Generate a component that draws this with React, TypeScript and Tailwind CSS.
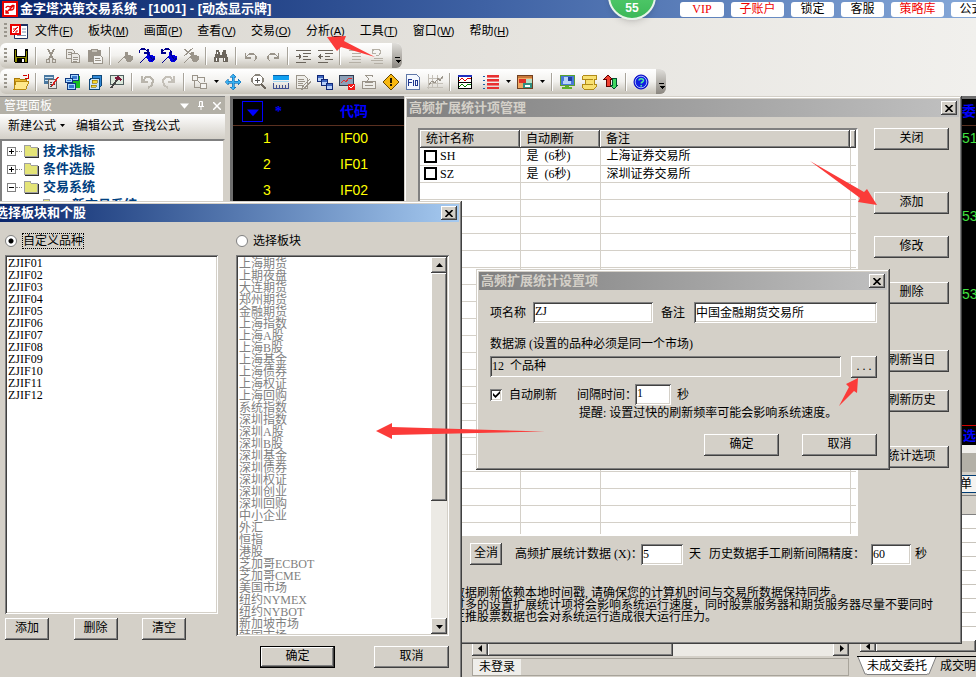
import type { ReactNode } from 'react';

const win =
  'absolute bg-[#d4d0c8] p-[3px] shadow-[inset_-1px_-1px_#404040,inset_1px_1px_#d4d0c8,inset_-2px_-2px_#808080,inset_2px_2px_#fff]';
const raised =
  'bg-[#d4d0c8] shadow-[inset_-1px_-1px_#404040,inset_1px_1px_#fff,inset_-2px_-2px_#808080]';
const sunken =
  'shadow-[inset_1px_1px_#808080,inset_-1px_-1px_#fff,inset_2px_2px_#404040,inset_-2px_-2px_#d4d0c8]';

const menus = [
  ['文件', 'F'],
  ['板块', 'M'],
  ['画面', 'P'],
  ['查看', 'V'],
  ['交易', 'O'],
  ['分析', 'A'],
  ['工具', 'T'],
  ['窗口', 'W'],
  ['帮助', 'H'],
];

const symbols = ['ZJIF01', 'ZJIF02', 'ZJIF03', 'ZJIF04', 'ZJIF05', 'ZJIF06', 'ZJIF07', 'ZJIF08', 'ZJIF09', 'ZJIF10', 'ZJIF11', 'ZJIF12'];

const boards = [
  '上海期货', '上期夜盘', '大连期货', '郑州期货', '金融期货', '上海指数', '上海A股', '上海B股',
  '上海基金', '上海债券', '上海权证', '上海回购', '系统指数', '深圳指数', '深圳A股', '深圳B股',
  '深圳基金', '深圳债券', '深圳权证', '深圳创业', '深圳回购', '中小企业', '外汇', '恒指', '港股',
  '芝加哥ECBOT', '芝加哥CME', '美国市场', '纽约NYMEX', '纽约NYBOT', '新加坡市场', '韩国市场',
];

const quotes = [
  ['1', 'IF00', '51'],
  ['2', 'IF01', ''],
  ['3', 'IF02', ''],
  ['', '', '53'],
  ['', '', ''],
  ['', '', ''],
  ['', '', '53'],
];

/* ---------- icons ---------- */

function Ico({ children }: { children: ReactNode }) {
  return (
    <svg width="16" height="16" viewBox="0 0 16 16" fill="none" shapeRendering="crispEdges" aria-hidden="true">
      {children}
    </svg>
  );
}

function Pin({ c, tip, extra }: { c: string; tip: string; extra?: string }) {
  return (
    <Ico>
      <path d="M1 15L8 8" stroke={tip} strokeWidth="1" />
      <path d="M8 4l3 0 0 3 5 1 0 3-3 3-3 0-2-4-2-1 2-2z" fill={c} />
      <path d="M9 5l4 6M12 13l4-3" stroke={tip} />
      {extra && <path d={extra} stroke={tip} strokeWidth="1.2" />}
    </Ico>
  );
}

const gray = '#9a948a';

const icons: Record<string, ReactNode> = {
  save: (
    <Ico>
      <path d="M1 1h14v14H2L1 14z" fill="#000" />
      <path d="M2 2h1v7H2zM13 3h1v6h-1z" fill="#8a8a00" />
      <path d="M4 1h8v7H4z" fill="#fff" />
      <path d="M2 9h12v1H2zM2 10h2v4H2zM12 10h2v4h-2z" fill="#8a8a00" />
      <path d="M9 11h2v3H9z" fill="#fff" />
    </Ico>
  ),
  cut: (
    <Ico>
      <path d="M5 1l5 10M11 1L6 11" stroke={gray} strokeWidth="1.4" />
      <path d="M3.5 11.5h3v3h-3zM9.5 11.5h3v3h-3z" stroke={gray} />
    </Ico>
  ),
  copy: (
    <Ico>
      <path d="M1.5 1.5h6l2 2v7h-8z" fill="#eceae6" stroke={gray} />
      <path d="M6.5 5.5h6l2 2v7h-8z" fill="#eceae6" stroke={gray} />
      <path d="M3 4h4M3 6h3M8 9h5M8 11h5M8 13h4" stroke={gray} />
    </Ico>
  ),
  paste: (
    <Ico>
      <path d="M1 2h13v12H1z" fill={gray} />
      <path d="M4 1h6v3H4z" fill="#c8c4bb" stroke={gray} />
      <path d="M6.5 7.5h7l2 2v6h-9z" fill="#f4f3f0" stroke={gray} />
      <path d="M8 10h5M8 12h6" stroke={gray} />
    </Ico>
  ),
  pin: <Pin c="#9a948a" tip="#9a948a" />,
  pinNext: <Pin c="#0000e0" tip="#00008c" extra="M0 5V3l2-2h4l3 3M9 1v4H5" />,
  pinPrev: <Pin c="#0000e0" tip="#00008c" extra="M10 5V3L8 1H4L1 4M1 1v4h4" />,
  pinClear: <Pin c="#9a948a" tip="#9a948a" extra="M1 1l9 7M10 0L1 8" />,
  find: (
    <Ico>
      <path d="M3 2h3v2h1v3h2V4h1V2h3v3l2 5v4h-5v-4H6v4H1v-4l2-5z" fill="#6b655c" />
      <path d="M3 10h1v3H3zM11 10h1v3h-1zM4 4h1v2H4z" fill="#fff" />
    </Ico>
  ),
  undo: (
    <Ico>
      <path d="M2.5 5v5h5M3 9l3-3h5l2 2v3l-2 2" stroke={gray} strokeWidth="1.2" />
    </Ico>
  ),
  redo: (
    <Ico>
      <path d="M13.5 5v5h-5M13 9l-3-3H5L3 8v3l2 2" stroke={gray} strokeWidth="1.2" />
    </Ico>
  ),
  indent: (
    <Ico>
      <path d="M1 2.5h15M8 5.5h8M8 8.5h5M8 11.5h8M1 14.5h10" stroke="#6b655c" />
      <path d="M1 8.5h5M4 6v5M5 7v3" stroke="#6b655c" />
    </Ico>
  ),
  outdent: (
    <Ico>
      <path d="M1 2.5h15M8 5.5h8M8 8.5h5M8 11.5h8M1 14.5h10" stroke="#6b655c" />
      <path d="M1 8.5h5M3 6v5M2 7v3" stroke="#6b655c" />
    </Ico>
  ),
  list: (
    <Ico>
      <path d="M2 2.5h10M5 5.5h9M5 8.5h9M5 11.5h9M2 14.5h12" stroke="#b5b0a6" />
    </Ico>
  ),
  listUndo: (
    <Ico>
      <path d="M3 4l2-3h5l2 3-2 3H7M3 1v4h4M5 10.5h9M2 12.5h12M5 15h9" stroke="#b5b0a6" />
    </Ico>
  ),
  open: (
    <Ico>
      <path d="M1 4h5l1 1h6v9H1z" fill="#e8b830" stroke="#a87808" />
      <path d="M3 7h13l-3 8H1z" fill="#ffe88c" stroke="#b88a10" />
      <path d="M10 2l2-1 2 1M15 0v4h-3" stroke="#d00000" />
    </Ico>
  ),
  report: (
    <Ico>
      <path d="M1 1h10v9H1z" fill="#4a78a0" />
      <path d="M2 3h8v1H2zM2 6h8v1H2z" fill="#cfe4f4" />
      <path d="M5.5 5.5h8v9h-8z" fill="#e4e4e4" stroke="#666" />
      <path d="M7 8h2v1H7zM10 8h2v1h-2zM7 10h2v1H7zM10 10h2v1h-2zM7 12h2v1H7z" fill="#444" />
      <path d="M15 3l-6 9" stroke="#d82020" strokeWidth="1.5" />
    </Ico>
  ),
  layout: (
    <Ico>
      <path d="M9 2h6v12H7V8z" fill="#18c020" />
      <path d="M5.5 0.5h8v6h-8z" fill="#a8d8ff" stroke="#103880" />
      <path d="M7 2h5v3H7z" fill="#3878d0" />
      <path d="M0.5 4.500h7v4h-7zM2.500 9.500h8v6h-8z" fill="#a8d8ff" stroke="#103880" />
      <path d="M2 6h4v1H2zM4 11h5v3H4z" fill="#3878d0" />
    </Ico>
  ),
  cabinet: (
    <Ico>
      <path d="M5 1h9v11l-3 3V4H5z" fill="#3088d8" stroke="#104878" />
      <path d="M4 4h8v11H2V7z" fill="#c8e4fc" stroke="#104878" />
      <path d="M5 6h5v3H5zM4 11h5v2H4z" fill="#f8d830" stroke="#806000" strokeWidth=".6" />
    </Ico>
  ),
  tool: (
    <Ico>
      <path d="M1.5 1.5h13v9h-13z" fill="#dce8dc" stroke="#506060" />
      <path d="M5 4l4-2 4 3-1 3-2-2-2 1z" fill="#7a1838" />
      <path d="M8 6L2 14" stroke="#444" strokeWidth="2" />
    </Ico>
  ),
  back: (
    <Ico>
      <path d="M3 2v6h6M4 7l3-4h4l3 3-1 5-4 3" stroke="#b9b5ac" strokeWidth="2" />
    </Ico>
  ),
  forward: (
    <Ico>
      <path d="M13 2v6H7M12 7L9 3H5L2 6l1 5 4 3" stroke="#c4c0b8" strokeWidth="2" />
    </Ico>
  ),
  tree: (
    <Ico>
      <path d="M1.5 1.5h5v5h-5zM9.500 9.500h6v5h-6z" fill="#f4f3f0" stroke={gray} />
      <path d="M3.500 7v6h5M7 3.500h6v4M7 7l3 3" stroke={gray} />
    </Ico>
  ),
  move: (
    <Ico>
      <path d="M8 0l3 3H9v4h4V5l3 3-3 3V9H9v4h2l-3 3-3-3h2V9H3v2L0 8l3-3v2h4V3H5z" fill="#38b0f0" stroke="#0868b0" strokeWidth=".6" />
    </Ico>
  ),
  zoom: (
    <Ico>
      <path d="M4 1h5l3 3v4l-3 3H4L1 8V4z" fill="#fff" stroke="#8a857c" strokeWidth="1.2" />
      <path d="M4 6.500h5M6.500 4v5" stroke="#555" />
      <path d="M10 10l5 5" stroke="#6b655c" strokeWidth="2" />
    </Ico>
  ),
  ruler: (
    <Ico>
      <path d="M0 1h16v5H0z" fill="#10a0f0" />
      <path d="M0 1h16v1H0z" fill="#0860a8" />
      <path d="M0 7h16v1H0z" fill="#a8d8f0" />
      <path d="M0.500 9v5M3.500 11v3M6.500 11v3M9.500 11v3M12.500 11v3M15.500 9v5M0 14.500h16" stroke="#405090" />
    </Ico>
  ),
  note: (
    <Ico>
      <path d="M1.5 1.5h8l3 3v10h-11z" fill="#eeede9" stroke={gray} />
      <path d="M3 5h6M3 7h7M3 9h5M3 11h5" stroke={gray} />
      <path d="M15 5L8 12l-1 3 3-1 6-7" stroke={gray} strokeWidth="1.3" />
    </Ico>
  ),
  cascade: (
    <Ico>
      <path d="M0.500 1.500h6v6h-6zM4.500 5.500h6v6h-6zM9.500 9.500h6v6h-6z" fill="#b8d0f8" stroke="#102878" />
      <path d="M1 2h5v2H1zM5 6h5v2H5zM10 10h5v2h-5z" fill="#4068c0" />
    </Ico>
  ),
  chartCheck: (
    <Ico>
      <path d="M0.500 1.500h14v10h-14z" fill="#8ca0b8" stroke="#303c50" />
      <path d="M2 9l3-3 2 2 3-4 3 1" stroke="#e03030" />
      <path d="M9 10h7v6H9z" fill="#f01818" />
      <path d="M10 12l2 2 3-3" stroke="#fff" />
    </Ico>
  ),
  sum: (
    <Ico>
      <path d="M1.5 7.500h13v7h-13z" fill="#eeede9" stroke={gray} />
      <path d="M11.500 3V1.500H4.500L8 5 4.500 8.500h7V7M4 11.500h8" stroke={gray} />
    </Ico>
  ),
  warn: (
    <Ico>
      <path d="M8 0l8 8-8 8-8-8z" fill="#f8b810" stroke="#684800" />
      <path d="M7 4h2v5H7zM7 10h2v2H7z" fill="#201800" />
    </Ico>
  ),
  f10: (
    <Ico>
      <path d="M1.5 0.500h10l3 3v12h-13z" fill="#f4f8ff" stroke="#6078a8" />
      <path d="M3.500 12V5.500h3M3.500 8.500h3M8.500 6v6M10.500 6.500h2v5h-2z" stroke="#203890" />
    </Ico>
  ),
  chart: (
    <Ico>
      <path d="M1.500 0v15M0 13.500h16M1 4.500h15M5.500 1v13M10.500 1v13M1 9.500h15" stroke="#c4c0b8" />
      <path d="M2 11l3-4 3 2 3-5 2 3 3-5" stroke={gray} />
    </Ico>
  ),
  wave: (
    <Ico>
      <path d="M1.500 1.500h13v13h-13z" fill="#fff" stroke="#000" />
      <path d="M1 1h14v2H1z" fill="#2030c0" />
      <path d="M2 7l3-3 3 3 3-3 3 1" stroke="#e00000" />
      <path d="M2 13l3-3 3 3 3-3 3 1" stroke="#008000" />
      <path d="M1 8.500h14" stroke="#000" />
    </Ico>
  ),
  bars: (
    <Ico>
      <path d="M0 2h2M0 6h2M0 10h2M0 14h2" stroke="#1860a8" />
      <path d="M4 1h12v2H4zM4 5h12v2H4zM4 9h12v2H4zM4 13h12v2H4z" fill="#e83030" />
      <path d="M4 3h12v1H4zM4 7h12v1H4zM4 11h12v1H4z" fill="#f08080" />
    </Ico>
  ),
  panes: (
    <Ico>
      <path d="M0.500 1.500h15v13h-15z" fill="#f0a860" stroke="#704020" />
      <path d="M1 2h14v2H1z" fill="#c87838" />
      <path d="M2 5h7v4H2z" fill="#e03028" />
      <path d="M9 5h6v4H9z" fill="#b8e0c8" />
      <path d="M6 9h9v5H6z" fill="#2f8f80" />
      <path d="M8 11h5v2H8z" fill="#fff" />
    </Ico>
  ),
  monitor: (
    <Ico>
      <path d="M1 1h14v10H1z" fill="#4878d8" stroke="#58a030" />
      <path d="M5 3h4v4H5zM4 7h8v3H4z" fill="#b8d4f8" />
      <path d="M9 3h4v4H9z" fill="#203fa0" />
      <path d="M6 12h4v1H6zM3 13h10v2H3z" fill="#60b028" />
    </Ico>
  ),
  scroll: (
    <Ico>
      <path d="M3 1h12v4h-2v5h2v3l-2 2H3l-2-2v-3h3V5H1V3z" fill="#f8e070" stroke="#b08a18" />
      <path d="M4 5h8M4 10h8" stroke="#b08a18" />
    </Ico>
  ),
  swap: (
    <Ico>
      <path d="M5 1l4 4H7v7H3V5H1z" fill="#f04030" stroke="#600000" />
      <path d="M11 15l-4-4h2V4h4v7h2z" fill="#40d860" stroke="#005030" />
    </Ico>
  ),
  help: (
    <svg width="16" height="16" viewBox="0 0 16 16" fill="none" aria-hidden="true">
      <circle cx="8" cy="8" r="7" fill="#1020e0" stroke="#0000c0" />
      <circle cx="8" cy="8" r="5.800" stroke="#c8dcff" strokeWidth=".8" />
      <path d="M6 6.500c0-2.500 4.500-2.500 4.500 0C10.500 8 8.200 8 8.200 9.500M8.200 11v1.500" stroke="#50f0a0" strokeWidth="1.500" />
    </svg>
  ),
};

function AppLogo() {
  return (
    <svg width="16" height="16" viewBox="0 0 16 16" fill="none" aria-hidden="true">
      <path d="M1 1h14v14H1z" fill="#fff" stroke="#e80000" strokeWidth="2" />
      <path d="M4 7c0-2 3-2 4-1l3-2M4 12l3-3h2c3 0 3-2 3-5M4 12l8-8M4 9v3h3" stroke="#e80000" strokeWidth="1.300" />
    </svg>
  );
}

function DocLogo() {
  return (
    <svg width="18" height="16" viewBox="0 0 18 16" fill="none" aria-hidden="true">
      <path d="M4.500 1.500h13v14h-13z" fill="#fff" stroke="#203060" />
      <path d="M4 1h14v2H4z" fill="#203060" />
      <path d="M12 6h4M12 9h4M7 12.500h9" stroke="#8090b0" />
      <path d="M1 2h9v9H1z" fill="#fff" stroke="#e80000" strokeWidth="2" />
      <path d="M3 6h2l3-2M3 9l5-5M5 9h2V7" stroke="#e80000" />
    </svg>
  );
}

function Folder() {
  return (
    <svg width="16" height="14" viewBox="0 0 16 14" shapeRendering="crispEdges" aria-hidden="true">
      <path d="M1 3l1-2h5l1 2h6v9H1z" fill="#e4e478" stroke="#a0a0a0" />
      <path d="M2 13h13V4" fill="none" stroke="#303030" />
    </svg>
  );
}

function Tri({ dir, className }: { dir: 'up' | 'down' | 'left' | 'right'; className?: string }) {
  const d = { up: 'M0 5h7L3.500 1z', down: 'M0 2h7L3.500 6z', left: 'M5 0v7L1 3.500z', right: 'M2 0v7l4-3.500z' }[dir];
  return (
    <svg width="7" height="7" viewBox="0 0 7 7" className={className} aria-hidden="true">
      <path d={d} fill="currentColor" />
    </svg>
  );
}

/* ---------- small controls ---------- */

function Btn({ children, className = 'w-[75px]' }: { children: ReactNode; className?: string }) {
  return <button className={`h-[22px] shrink-0 pb-0.5 text-center ${raised} ${className}`}>{children}</button>;
}

function CloseBtn() {
  return (
    <button aria-label="关闭窗口" className={`mr-0.5 flex h-3.5 w-4 items-center justify-center text-black ${raised}`}>
      <svg width="8" height="7" viewBox="0 0 8 7" aria-hidden="true">
        <path d="M0.500 0l7 7M7.500 0l-7 7" stroke="#000" strokeWidth="1.600" />
      </svg>
    </button>
  );
}

function TitleBar({ text, active }: { text: string; active?: boolean }) {
  return (
    <header
      className={`flex h-[18px] items-center justify-between pl-0.5 text-[13px] leading-[18px] font-bold ${
        active ? 'bg-linear-to-r from-[#0a246a] to-[#a6caf0] text-white' : 'bg-linear-to-r from-[#808080] to-[#c0c0c0] text-[#d4d0c8]'
      }`}
    >
      <h2>{text}</h2>
      <CloseBtn />
    </header>
  );
}

function Tool({ name }: { name: string }) {
  return (
    <button aria-label={name} className="flex w-[22px] shrink-0 items-center justify-center">
      {icons[name]}
    </button>
  );
}

function Sep() {
  return <span className="mx-[3px] h-[18px] w-0.5 shrink-0 border-r border-white bg-[#a8a49b]" />;
}

function Grip() {
  return <span className="mr-[3px] ml-1 h-4 w-[3px] shrink-0 bg-[repeating-linear-gradient(#9a968d_0_2px,transparent_2px_4px)]" />;
}

function Drop() {
  return (
    <button aria-label="更多" className="flex w-3 shrink-0 items-center justify-center">
      <svg width="5" height="3" viewBox="0 0 5 3" aria-hidden="true">
        <path d="M0 0h5L2.500 3z" />
      </svg>
    </button>
  );
}

function More() {
  return (
    <button aria-label="工具栏选项" className="ml-1 flex w-2.5 items-end justify-center self-stretch rounded-r-md bg-linear-to-b from-[#e0deda] to-[#8b8780] pb-1">
      <svg width="7" height="7" viewBox="0 0 7 7" shapeRendering="crispEdges" aria-hidden="true">
        <path d="M1 0h5v1H1zM1 3h6L4 6z" />
      </svg>
    </button>
  );
}

const bar = 'flex w-max items-center rounded-md bg-linear-to-b from-white via-[#f2f1ee] to-[#c6c2b8]';

/* ---------- main window ---------- */

function Chrome() {
  return (
    <>
      <header className="flex h-[18px] items-center bg-linear-to-r from-[#0a246a] via-[#3f62a4] to-[#86a8d8] text-white">
        <span className="ml-0.5 flex">
          <AppLogo />
        </span>
        <h1 className="ml-0.5 flex-1 text-[13px] leading-[18px] font-bold whitespace-nowrap">
          金字塔决策交易系统
          <span className="font-['Liberation_Sans','Noto_Sans_CJK_SC',sans-serif]"> - [1001] - [动态显示牌]</span>
        </h1>
        <div className="flex w-[296px] gap-[7px] overflow-hidden text-black">
          <button className="h-[15px] w-11 shrink-0 rounded-[3px] bg-white leading-[15px] text-[#f00000]">VIP</button>
          <button className="h-[15px] w-[53px] shrink-0 rounded-[3px] bg-white leading-[15px] text-[#f00000]">子账户</button>
          <button className="h-[15px] w-[43px] shrink-0 rounded-[3px] bg-white leading-[15px]">锁定</button>
          <button className="h-[15px] w-[43px] shrink-0 rounded-[3px] bg-white leading-[15px]">客服</button>
          <button className="h-[15px] w-[53px] shrink-0 rounded-[3px] bg-white leading-[15px] text-[#f00000]">策略库</button>
          <button className="h-[15px] w-[53px] shrink-0 rounded-[3px] bg-white leading-[15px]">公式库</button>
        </div>
      </header>
      <div className="bg-linear-to-r from-[#d9d6cf] to-[#f1f0ed] pb-0.5">
        <nav className="flex h-[25px] items-center gap-[15px]">
          <span className="-mr-2 flex items-center">
            <Grip />
            <DocLogo />
          </span>
          {menus.map(([label, key]) => (
            <button key={key} className="whitespace-nowrap">
              {label}
              <span className="font-['Liberation_Sans'] text-[11px]">
                (<u>{key}</u>)
              </span>
            </button>
          ))}
        </nav>
        <div className={`h-[25px] ${bar}`}>
          <Grip />
          <Tool name="save" />
          <Sep />
          <Tool name="cut" />
          <Tool name="copy" />
          <Tool name="paste" />
          <Sep />
          <Tool name="pin" />
          <Tool name="pinNext" />
          <Tool name="pinPrev" />
          <Tool name="pinClear" />
          <Sep />
          <Tool name="find" />
          <Sep />
          <Tool name="undo" />
          <Tool name="redo" />
          <Sep />
          <Tool name="indent" />
          <Tool name="outdent" />
          <Sep />
          <Tool name="list" />
          <Tool name="listUndo" />
          <More />
        </div>
        <div className={`mt-px h-[25px] ${bar}`}>
          <Grip />
          <Tool name="open" />
          <Sep />
          <Tool name="report" />
          <Tool name="layout" />
          <Tool name="cabinet" />
          <Tool name="tool" />
          <Sep />
          <Tool name="back" />
          <Tool name="forward" />
          <Sep />
          <Tool name="tree" />
          <Drop />
          <Tool name="move" />
          <span className="w-1" />
          <Tool name="zoom" />
          <Tool name="ruler" />
          <Tool name="note" />
          <Tool name="cascade" />
          <Tool name="chartCheck" />
          <Tool name="sum" />
          <Tool name="warn" />
          <Tool name="f10" />
          <Tool name="chart" />
          <Sep />
          <Tool name="wave" />
          <span className="w-1" />
          <Tool name="bars" />
          <Drop />
          <Tool name="panes" />
          <Drop />
          <Sep />
          <Tool name="monitor" />
          <Tool name="scroll" />
          <Tool name="swap" />
          <Sep />
          <Tool name="help" />
          <More />
        </div>
      </div>
    </>
  );
}

function TreeItem({ text, open }: { text: string; open?: boolean }) {
  return (
    <li className="flex h-[18px] items-center">
      <span className="flex size-[9px] items-center justify-center border border-[#808080] bg-white">
        <svg width="5" height="5" viewBox="0 0 5 5" shapeRendering="crispEdges" aria-hidden="true">
          <path d={open ? 'M0 2h5v1H0z' : 'M0 2h5v1H0zM2 0h1v5H2z'} />
        </svg>
      </span>
      <span className="mr-px w-1.5 border-t border-dotted border-[#808080]" />
      <Folder />
      <span className="ml-1 text-[13px] leading-[18px] font-bold text-[#004080]">{text}</span>
    </li>
  );
}

function SidePanel() {
  return (
    <aside className="flex w-[225px] shrink-0 flex-col bg-[#d4d0c8]">
      <div className="flex h-[18px] items-center border-t border-[#808080] bg-[#b3b0a7] px-1 text-white">
        <h2 className="flex-1">管理面板</h2>
        <button aria-label="菜单" className="mr-2">
          <Tri dir="down" className="size-[9px]" />
        </button>
        <button aria-label="固定" className="mr-2">
          <svg width="8" height="9" viewBox="0 0 8 9" fill="none" aria-hidden="true">
            <path d="M2.500 5V0.500h3V5M1 5.500h6M4 6v3M5 1v4" stroke="#fff" />
          </svg>
        </button>
        <button aria-label="关闭">
          <svg width="8" height="8" viewBox="0 0 8 8" aria-hidden="true">
            <path d="M0 0l8 8M8 0L0 8" stroke="#fff" strokeWidth="1.500" />
          </svg>
        </button>
      </div>
      <div className="flex h-[25px] items-center bg-linear-to-b from-white to-[#d4d0c8] pb-0.5 pl-2">
        <button>新建公式</button>
        <Drop />
        <button className="ml-2">编辑公式</button>
        <button className="ml-2">查找公式</button>
      </div>
      <div className="flex-1 border-2 border-[#808080] border-r-[#d4d0c8] bg-white pt-px pl-[5px]">
        <ul>
          <TreeItem text="技术指标" />
          <TreeItem text="条件选股" />
          <TreeItem text="交易系统" open />
          <li className="flex h-[18px] items-center pl-[35px]">
            <Folder />
            <span className="ml-[14px] text-[13px] leading-[18px] font-bold text-[#004080]">新交易系统</span>
          </li>
        </ul>
      </div>
    </aside>
  );
}

function Quotes() {
  return (
    <div className="h-[349px] overflow-hidden border-3 border-r-0 border-b-0 border-[#6e6e6e] bg-black">
      <table className="w-full table-fixed border-collapse text-left">
        <thead>
          <tr className="h-[26px] border-b border-[#5a3020] text-[#0000ff]">
            <th className="w-[42px] pl-[9px]">
              <button aria-label="排序" className="flex size-[21px] items-center justify-center border border-[#0000ff]">
                <Tri dir="down" className="size-3" />
              </button>
            </th>
            <th className="w-[45px] text-sm font-bold">*</th>
            <th className="pl-5 text-sm">代码</th>
            <th className="w-[14px] text-sm whitespace-nowrap">委卖</th>
          </tr>
        </thead>
        <tbody className="font-['Liberation_Sans'] text-sm">
          {quotes.map(([no, code, ask], i) => (
            <tr key={i} className="h-[26px] text-[#ffff00]">
              <td className="pl-[30px]">{no}</td>
              <td />
              <td className="pl-5">{code}</td>
              <td className="text-[#40e040]">{ask}</td>
            </tr>
          ))}
        </tbody>
      </table>
      <div className="mt-[118px] flex h-5 items-center justify-end border-t border-[#d00000] text-[13px] font-bold text-[#0000ff]">
        <a href="#pick">选</a>
      </div>
    </div>
  );
}

function OrderPane() {
  return (
    <section className="flex w-[119px] shrink-0 flex-col overflow-hidden bg-[#d4d0c8]">
      <div className="h-2 shrink-0 bg-[#f0efec]" />
      <div className="h-[19px] shrink-0 bg-[#b3b0a7]" />
      <div className="flex h-[23px] shrink-0 items-center justify-end">
        <button className="h-[18px] w-[119px] border-y border-[#003c74] bg-[#f4f3f0] pr-1 text-right">下单</button>
      </div>
      <div className="h-5 shrink-0 border-y border-[#808080] bg-[#d4d0c8]" />
      <div className="flex-1 bg-white bg-[repeating-linear-gradient(#fff_0_13px,#c8c4bc_13px_14px)]" />
      <div className="flex h-[17px] shrink-0 border-b border-black pb-1">
        <span className={`ml-[3px] flex w-4 items-center justify-center ${raised}`}>
          <Tri dir="left" />
        </span>
        <span className={`flex-1 ${raised}`} />
      </div>
      <div className="flex h-5 shrink-0 items-start whitespace-nowrap">
        <TabEdge d="M1 0l7 17h2V0z" line="M1 0l7 17h2" />
        <button className="h-[18px] border-b border-[#808080] bg-white">未成交委托</button>
        <TabEdge d="M0 0v17h2l7-17z" line="M0 17h2l7-17" />
        <button className="ml-[3px] h-[18px]">成交明细</button>
      </div>
    </section>
  );
}

function TabEdge({ d, line }: { d: string; line: string }) {
  return (
    <svg width="10" height="18" viewBox="0 0 10 18" className="shrink-0" aria-hidden="true">
      <path d={d} fill="#fff" />
      <path d={line} fill="none" stroke="#808080" />
    </svg>
  );
}

function Desk() {
  return (
    <div className="flex min-w-0 flex-1 flex-col">
      <Quotes />
      <div className="flex flex-1">
        <section className="flex flex-1 flex-col justify-end pl-[242px]">
          <div className="flex h-4 bg-[#eceae5]">
            <span className={`flex w-4 items-center justify-center ${raised}`}>
              <Tri dir="left" />
            </span>
            <span className={`w-[185px] ${raised}`} />
            <span className="flex-1" />
            <span className={`flex w-4 items-center justify-center ${raised}`}>
              <Tri dir="right" />
            </span>
          </div>
          <div className="mt-0.5 mb-px flex h-[18px] border border-[#a8a49b]">
            <button className="w-12 bg-[#efeeea]">未登录</button>
          </div>
        </section>
        <span className="w-2" />
        <OrderPane />
      </div>
    </div>
  );
}

/* ---------- dialogs ---------- */

function ManagerDialog() {
  return (
    <section className={`top-24 left-[404px] w-[558px] ${win}`}>
      <TitleBar text="高频扩展统计项管理" />
      <div className="flex gap-4 pt-[11px] pr-2.5 pl-[11px]">
        <div className="h-[408px] flex-1 overflow-hidden border-2 border-[#808080] border-r-white border-b-white bg-white">
          <table className="w-full table-fixed border-collapse text-left">
            <thead>
              <tr className="h-[18px]">
                <th className={`w-[100px] pl-1.5 font-normal ${raised}`}>统计名称</th>
                <th className={`w-20 pl-1.5 font-normal ${raised}`}>自动刷新</th>
                <th className={`pl-1.5 font-normal ${raised}`}>备注</th>
                <th className={`w-1.5 ${raised}`} />
              </tr>
            </thead>
            <tbody>
              {[['SH', '上海证券交易所'], ['SZ', '深圳证券交易所'], ...Array(21).fill(['', ''])].map(([code, note], i) => (
                <tr key={i} className="h-[17px] border-b border-[#d4d0c8] leading-4">
                  <td className="border-r border-[#d4d0c8] pl-1">
                    {code && (
                      <label className="flex items-center gap-[3px]">
                        <input type="checkbox" className="size-[13px] appearance-none border-2 border-black bg-white" />
                        {code}
                      </label>
                    )}
                  </td>
                  <td className="border-r border-[#d4d0c8] pl-1.5">{code && <>是&nbsp;&nbsp;(6秒)</>}</td>
                  <td className="border-r border-[#d4d0c8] pl-1.5">{note}</td>
                  <td />
                </tr>
              ))}
            </tbody>
          </table>
        </div>
        <div className="flex flex-col">
          <Btn>关闭</Btn>
          <span className="h-[42px]" />
          <Btn>添加</Btn>
          <span className="h-[22px]" />
          <Btn>修改</Btn>
          <span className="h-6" />
          <Btn>删除</Btn>
          <span className="h-[46px]" />
          <Btn>刷新当日</Btn>
          <span className="h-[18px]" />
          <Btn>刷新历史</Btn>
          <span className="h-[34px]" />
          <Btn>统计选项</Btn>
        </div>
      </div>
      <div className="mt-[7px] flex h-[22px] items-center pl-[63px]">
        <Btn className="w-8">全消</Btn>
        <label htmlFor="days" className="ml-[13px] w-[126px] whitespace-nowrap">
          高频扩展统计数据 (X)：
        </label>
        <input id="days" defaultValue="5" className={`h-[21px] w-[42px] bg-white px-0.5 ${sunken}`} />
        <span className="ml-1.5">天</span>
        <label htmlFor="gap" className="ml-2 w-[162px] whitespace-nowrap">
          历史数据手工刷新间隔精度：
        </label>
        <input id="gap" defaultValue="60" className={`h-[21px] w-10 bg-white px-0.5 ${sunken}`} />
        <span className="ml-1">秒</span>
      </div>
      <p className="mt-[22px] mb-[18px] pl-[46px] leading-3 whitespace-nowrap">
        数据刷新依赖本地时间戳, 请确保您的计算机时间与交易所数据保持同步。
        <br />
        过多的设置扩展统计项将会影响系统运行速度，同时股票服务器和期货服务器尽量不要同时
        <br />
        主推股票数据也会对系统运行造成很大运行压力。
      </p>
    </section>
  );
}

function SettingDialog() {
  return (
    <section className={`top-[269px] left-[476px] w-[414px] ${win}`}>
      <TitleBar text="高频扩展统计设置项" />
      <div className="pt-3 pr-2.5 pb-[11px] pl-[11px]">
        <div className="flex items-center">
          <label htmlFor="item">项名称</label>
          <input id="item" defaultValue="ZJ" className={`ml-[7px] h-[21px] w-[120px] bg-white px-0.5 pb-0.5 ${sunken}`} />
          <label htmlFor="memo" className="ml-2">
            备注
          </label>
          <input id="memo" defaultValue="中国金融期货交易所" className={`ml-[9px] h-[21px] min-w-0 flex-1 bg-white px-0.5 pb-0.5 ${sunken}`} />
        </div>
        <label htmlFor="source" className="mt-[13px] block">
          数据源 (设置的品种必须是同一个市场)
        </label>
        <div className="mt-1 flex">
          <input id="source" readOnly value="12  个品种" className={`h-[21px] min-w-0 flex-1 px-0.5 pb-1 ${sunken}`} />
          <Btn className="ml-2.5 w-[26px]">. . .</Btn>
        </div>
        <div className="mt-1.5 flex h-[21px] items-center">
          <label className="flex items-center gap-[7px]">
            <input type="checkbox" defaultChecked className={`size-3 appearance-none bg-white ${sunken}`} />
            <svg width="7" height="7" viewBox="0 0 7 7" className="-mr-[5px] -ml-4" aria-hidden="true">
              <path d="M0 2v2.500l2.500 2.500 4.500-4.500V0L2.500 4.500z" />
            </svg>
            <span className="ml-[7px]">自动刷新</span>
          </label>
          <label htmlFor="sec" className="ml-5 w-[58px] whitespace-nowrap">
            间隔时间：
          </label>
          <input id="sec" defaultValue="1" className={`h-[21px] w-9 bg-white px-0.5 pb-0.5 ${sunken}`} />
          <span className="ml-1.5">秒</span>
        </div>
        <p className="pl-[89px] leading-4">提醒: 设置过快的刷新频率可能会影响系统速度。</p>
        <div className="mt-[13px] flex justify-end gap-[23px]">
          <Btn>确定</Btn>
          <Btn>取消</Btn>
        </div>
      </div>
    </section>
  );
}

const listbox =
  'min-w-0 flex-1 appearance-none overflow-hidden px-px outline-none [&>option]:h-3 [&>option]:min-h-0 [&>option]:p-0 [&>option]:leading-3';

function PickDialog() {
  return (
    <section className={`top-[201px] -left-2.5 w-[472px] ${win}`}>
      <TitleBar text="选择板块和个股" active />
      <div className="flex gap-[18px] pt-2.5 pr-2.5 pb-8 pl-3">
        <div className="w-[213px]">
          <label className="flex h-[17px] items-center gap-[5px]">
            <input type="radio" name="mode" defaultChecked className="m-0 size-3 appearance-none rounded-full border border-[#808080] bg-[radial-gradient(#000_0_2px,#fff_3px)]" />
            <span className="border border-dotted border-black leading-3.5">自定义品种</span>
          </label>
          <div className={`mt-1.5 flex h-[359px] overflow-hidden bg-white p-0.5 ${sunken}`}>
            <select multiple aria-label="自定义品种" className={`${listbox} -mt-px text-black`}>
              {symbols.map((s) => (
                <option key={s}>{s}</option>
              ))}
            </select>
          </div>
          <div className="mt-1 flex justify-between pr-8">
            <Btn className="w-11">添加</Btn>
            <Btn className="w-11">删除</Btn>
            <Btn className="w-11">清空</Btn>
          </div>
        </div>
        <div className="w-[213px]">
          <label className="flex h-[17px] items-center gap-[5px]">
            <input type="radio" name="mode" className="m-0 size-3 appearance-none rounded-full border border-[#808080] bg-white" />
            <span>选择板块</span>
          </label>
          <div className={`mt-1.5 flex h-[381px] overflow-hidden bg-white p-0.5 ${sunken}`}>
            <select multiple disabled aria-label="选择板块" className={`${listbox} -mt-[3px] opacity-100 [&>option]:text-[#808080]`}>
              {boards.map((s) => (
                <option key={s}>{s}</option>
              ))}
            </select>
            <div className="flex w-4 flex-col bg-[#eceae5]">
              <span className={`flex h-4 items-center justify-center ${raised}`}>
                <Tri dir="up" />
              </span>
              <span className={`h-[228px] ${raised}`} />
              <span className="flex-1" />
              <span className={`flex h-4 items-center justify-center ${raised}`}>
                <Tri dir="down" />
              </span>
            </div>
          </div>
          <div className="mt-2.5 flex justify-between pl-6">
            <Btn className="w-[75px] border border-black">确定</Btn>
            <Btn>取消</Btn>
          </div>
        </div>
      </div>
    </section>
  );
}

function Arrows() {
  return (
    <svg width="976" height="677" viewBox="0 0 976 677" fill="#fb3b39" className="pointer-events-none absolute top-0 left-0" aria-hidden="true">
      <path d="M327 37l19-1-2 5 31 16-34-10-4 4z" />
      <path d="M810 161l54 31 3-3 10 16-19-3 2-4z" />
      <path d="M376 431l16-8v4l153 4.500-153 3.500v4z" />
      <path d="M858 378l-1 15-3-2-15 15 10-19-3-3z" />
    </svg>
  );
}

export default function App() {
  return (
    <div className="relative flex h-screen flex-col overflow-hidden bg-[#d4d0c8] font-['Liberation_Serif','Noto_Sans_CJK_SC',serif] text-xs leading-4 text-black">
      <Chrome />
      <main className="flex min-h-0 flex-1 gap-[5px]">
        <SidePanel />
        <Desk />
      </main>
      <ManagerDialog />
      <SettingDialog />
      <PickDialog />
      <div className="absolute -top-7 left-[608px] flex size-12 items-end justify-center rounded-full border-2 border-[#e8f4ea] bg-linear-to-b from-[#60d878] to-[#3cb858] pb-0.5 font-['Liberation_Sans'] font-bold text-white shadow-md">
        55
      </div>
      <Arrows />
    </div>
  );
}
